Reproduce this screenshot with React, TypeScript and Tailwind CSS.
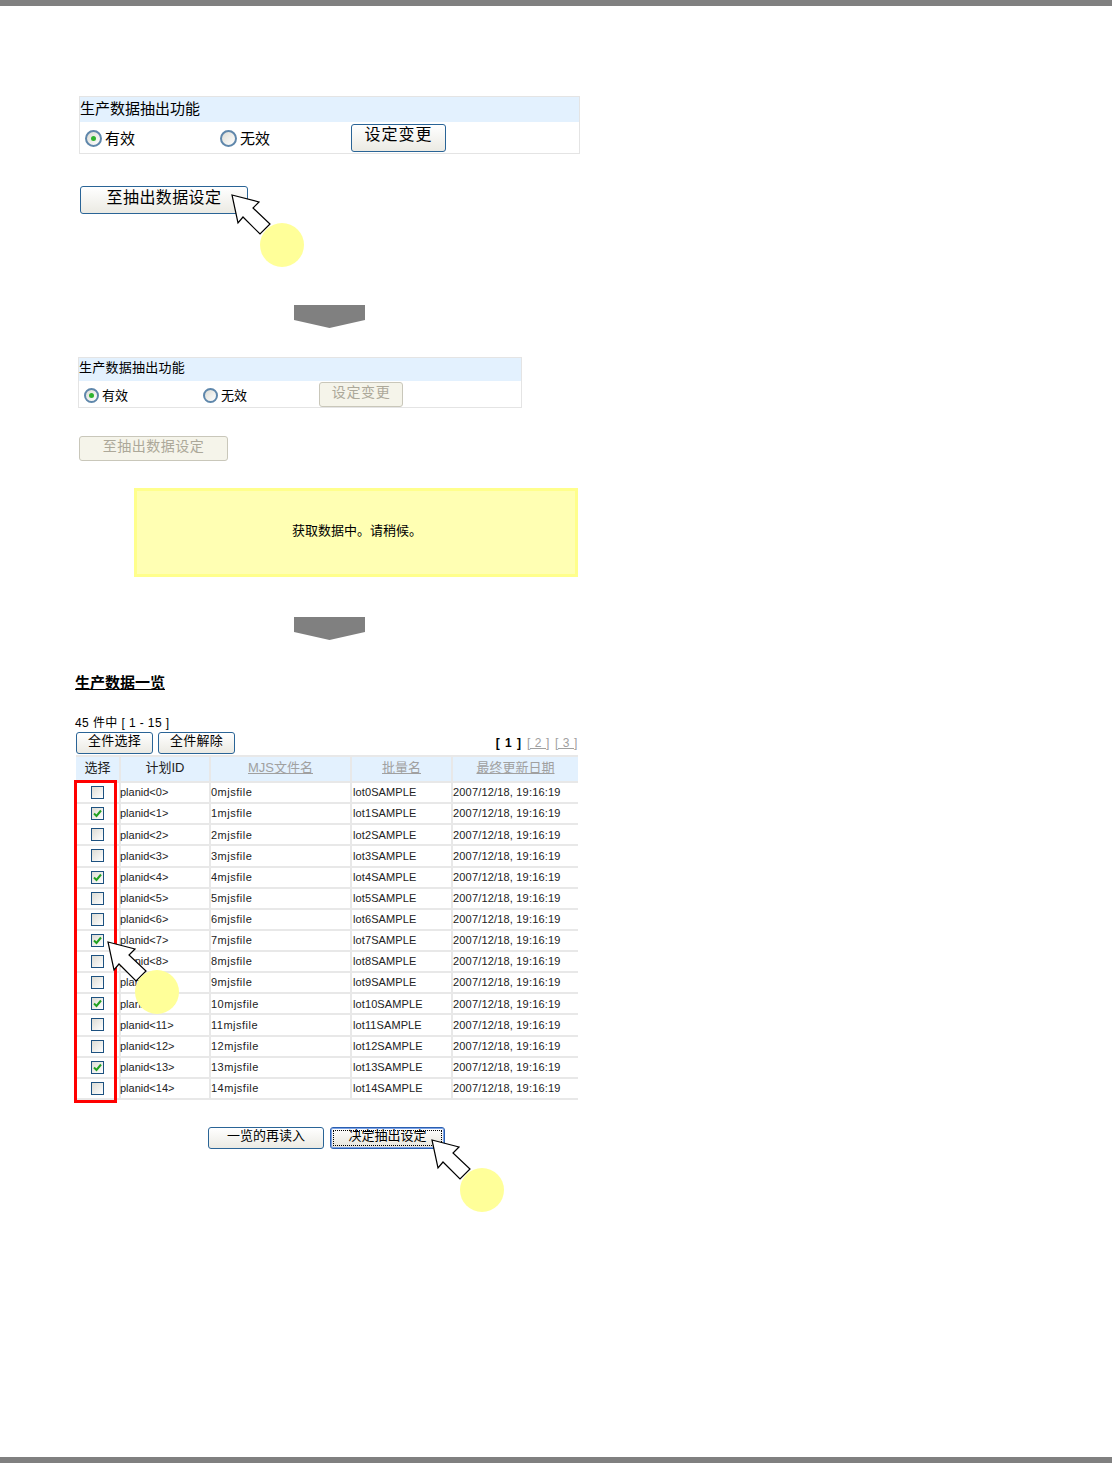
import React from 'react';

const CJK = "font-['Liberation_Sans','Noto_Sans_CJK_SC',sans-serif]";

const rows = Array.from({ length: 15 }, (_, i) => ({
  id: `planid<${i}>`,
  file: `${i}mjsfile`,
  lot: `lot${i}SAMPLE`,
  checked: i % 3 === 1,
}));

function Cursor({ className }: { className: string }) {
  return (
    <svg className={`absolute z-10 ${className}`} width="42" height="42" viewBox="0 0 42 42">
      <polygon
        points="1,1 28,8 22,14 39,30 29,40 12,23 7,29"
        fill="#fff"
        stroke="#000"
        strokeWidth="1.2"
      />
    </svg>
  );
}

function Marker({ className }: { className: string }) {
  return <div className={`absolute z-10 w-[44px] h-[44px] rounded-full bg-[#ffff99] ${className}`} />;
}

function Arrow({ className }: { className: string }) {
  return (
    <div className={`flex justify-center w-[71px] ${className}`}>
      <svg width="71" height="23" viewBox="0 0 71 23">
        <polygon points="0,0 71,0 71,15 35.5,23 0,15" fill="#808080" />
      </svg>
    </div>
  );
}

function XpButton({
  label,
  className,
  textClass = '-mt-[3px]',
  disabled,
  focused,
}: {
  label: string;
  className: string;
  textClass?: string;
  disabled?: boolean;
  focused?: boolean;
}) {
  const skin = disabled
    ? 'border-[#c9c7ba] bg-[#f5f4ea] text-[#aca899]'
    : focused
      ? 'border-[#2a5fb0] bg-gradient-to-b from-white to-[#e6e4da] text-black shadow-[inset_0_0_0_1px_#7ba2e7]'
      : 'border-[#2a6496] bg-gradient-to-b from-white to-[#ebeae3] text-black';
  return (
    <div className={`relative flex items-center justify-center border rounded-[3px] ${skin} ${className}`}>
      {focused && <div className="absolute inset-[2px] border border-dotted border-black" />}
      <span className={`relative ${textClass}`}>{label}</span>
    </div>
  );
}

function Radio({ on, size, className }: { on?: boolean; size: string; className: string }) {
  return (
    <div
      className={`flex items-center justify-center rounded-full border-2 border-[#5f87ab] bg-gradient-to-br from-[#dcdcd5] to-white ${size} ${className}`}
    >
      {on && <div className="w-[5px] h-[5px] rounded-full bg-[#2fb32f]" />}
    </div>
  );
}

function Check({ on }: { on: boolean }) {
  return (
    <div className="flex items-center justify-center w-[13px] h-[13px] border border-[#1c5180] bg-gradient-to-br from-[#dcdcd5] to-white">
      {on && (
        <svg width="9" height="9" viewBox="0 0 9 9">
          <path d="M1 4.5 L3.5 7 L8 1.5" fill="none" stroke="#21a121" strokeWidth="2" />
        </svg>
      )}
    </div>
  );
}

function SettingPanel({
  width,
  headerClass,
  bodyHeight,
  text,
  radioSize,
  radioOffset,
  labelOffset,
  secondGap,
  children,
}: {
  width: string;
  headerClass: string;
  bodyHeight: string;
  text: string;
  radioSize: string;
  radioOffset: string;
  labelOffset: string;
  secondGap: string;
  children: React.ReactNode;
}) {
  return (
    <div className={`border border-[#e4e4e4] ${width} ${text}`}>
      <div className={`flex items-center bg-[#e3f1fe] text-black ${headerClass}`}>生产数据抽出功能</div>
      <div className={`flex items-center pl-[5px] text-black ${bodyHeight}`}>
        <Radio on size={radioSize} className={radioOffset} />
        <span className={`ml-[3px] ${labelOffset}`}>有效</span>
        <div className={secondGap} />
        <Radio size={radioSize} className={radioOffset} />
        <span className={`ml-[3px] ${labelOffset}`}>无效</span>
        {children}
      </div>
    </div>
  );
}

const cols = 'grid grid-cols-[45px_90px_141px_101px_125px]';

function DataTable() {
  const head = 'flex items-center justify-center pb-[2px] border-r-2 border-[#e8e8e8] last:border-r-0';
  const link = 'text-[#a0a0a0] underline';
  return (
    <div className="relative w-[502px] mt-[1px] text-[11px] text-[#222]">
      <div className={`${cols} h-[28px] bg-[#e3f1fe] border-y-2 border-[#e8e8e8] text-[13px]`}>
        <div className={head}>选择</div>
        <div className={head}>计划ID</div>
        <div className={`${head} ${link}`}>MJS文件名</div>
        <div className={`${head} ${link}`}>批量名</div>
        <div className={`${head} ${link}`}>最终更新日期</div>
      </div>
      {rows.map((row) => (
        <div key={row.id} className={`${cols} h-[21.14px] border-b-2 border-[#e8e8e8]`}>
          <div className="flex items-center justify-center border-r-2 border-[#e8e8e8]">
            <Check on={row.checked} />
          </div>
          <div className="flex items-center border-r-2 border-[#e8e8e8] -ml-[2px] pl-[1px]">{row.id}</div>
          <div className="flex items-center border-r-2 border-[#e8e8e8] -ml-[1px] pl-[1px] tracking-[0.5px]">{row.file}</div>
          <div className="flex items-center border-r-2 border-[#e8e8e8] pl-[1px] tracking-[0.1px]">{row.lot}</div>
          <div className="flex items-center tracking-[0.18px]">2007/12/18, 19:16:19</div>
        </div>
      ))}
      <div className="absolute left-[-2px] top-[25px] w-[43px] h-[323px] border-[3px] border-[#ff0000]" />
      <Cursor className="left-[31px] top-[186px]" />
      <Marker className="left-[59px] top-[215px]" />
    </div>
  );
}

export default function App() {
  return (
    <div className={`w-[1112px] h-[1463px] flex flex-col bg-white text-black ${CJK}`}>
      <div className="h-[6px] bg-[#808080]" />
      <main className="flex-1 pl-[79px]">
        <div className="pt-[90px]">
          <SettingPanel
            width="w-[501px]"
            headerClass="h-[25px]"
            bodyHeight="h-[31px]"
            text="text-[15px]"
            radioSize="w-[17px] h-[17px]"
            radioOffset="mt-[1px]"
            labelOffset="mt-[4px]"
            secondGap="w-[85px]"
          >
            <XpButton
              label="设定变更"
              textClass="-mt-[5px]"
              className="ml-[81px] w-[95px] h-[28px] text-[16px] tracking-[1px]"
            />
          </SettingPanel>
        </div>

        <div className="relative mt-[32px] ml-[1px] w-[168px]">
          <XpButton
            label="至抽出数据设定"
            textClass="-mt-[5px]"
            className="w-[168px] h-[28px] text-[16px] tracking-[0.4px]"
          />
          <Cursor className="left-[151px] top-[8px]" />
          <Marker className="left-[180px] top-[37px]" />
        </div>

        <Arrow className="ml-[215px] mt-[91px]" />

        <div className="-ml-[1px] mt-[29px]">
          <SettingPanel
            width="w-[444px]"
            headerClass="h-[23px] pb-[3px] tracking-[0.25px]"
            bodyHeight="h-[26px]"
            text="text-[13px]"
            radioSize="w-[15px] h-[15px]"
            radioOffset="mt-[2px]"
            labelOffset="mt-[4px]"
            secondGap="w-[75px]"
          >
            <XpButton
              label="设定变更"
              disabled
              textClass="-mt-[4px]"
              className="ml-[72px] mt-[1px] w-[84px] h-[25px] text-[14px] tracking-[0.6px]"
            />
          </SettingPanel>
        </div>

        <XpButton
          label="至抽出数据设定"
          disabled
          textClass="-mt-[5px]"
          className="mt-[28px] w-[149px] h-[25px] text-[14px] tracking-[0.5px]"
        />

        <div className="flex items-center justify-center ml-[55px] mt-[27px] pb-[4px] pl-[2px] w-[444px] h-[89px] border-[3px] border-[#ffff8c] bg-[#ffffb3] text-[13px]">
          获取数据中。请稍候。
        </div>

        <Arrow className="ml-[215px] mt-[40px]" />

        <div className="-ml-[4px] mt-[34px] text-[15px] font-bold underline leading-[18px]">生产数据一览</div>

        <div className="-ml-[4px] mt-[23px] text-[12px] leading-[16px] tracking-[0.4px]">45 件中 [ 1 - 15 ]</div>

        <div className="-ml-[3px] w-[502px]">
          <div className="flex items-center h-[23px]">
            <XpButton label="全件选择" className="w-[77px] h-[22px] text-[13px] tracking-[0.2px]" />
            <XpButton label="全件解除" className="ml-[5px] w-[77px] h-[22px] text-[13px] tracking-[0.2px]" />
            <div className="ml-auto mt-[1px] flex gap-[5px] text-[12px]">
              <span className="font-bold tracking-[1px]">[ 1 ]</span>
              <span className="text-[#a0a0a0] underline tracking-[0.6px]">[ 2 ]</span>
              <span className="text-[#a0a0a0] underline tracking-[0.6px]">[ 3 ]</span>
            </div>
          </div>
          <DataTable />
        </div>

        <div className="relative flex mt-[27px] ml-[129px] w-[237px] gap-[6px]">
          <XpButton
            label="一览的再读入"
            textClass="-mt-[5px]"
            className="w-[116px] h-[22px] text-[13px]"
          />
          <XpButton
            label="决定抽出设定"
            focused
            textClass="-mt-[5px]"
            className="w-[115px] h-[22px] text-[13px]"
          />
          <Cursor className="left-[223px] top-[12px]" />
          <Marker className="left-[252px] top-[41px]" />
        </div>
      </main>
      <div className="h-[6px] bg-[#808080]" />
    </div>
  );
}
